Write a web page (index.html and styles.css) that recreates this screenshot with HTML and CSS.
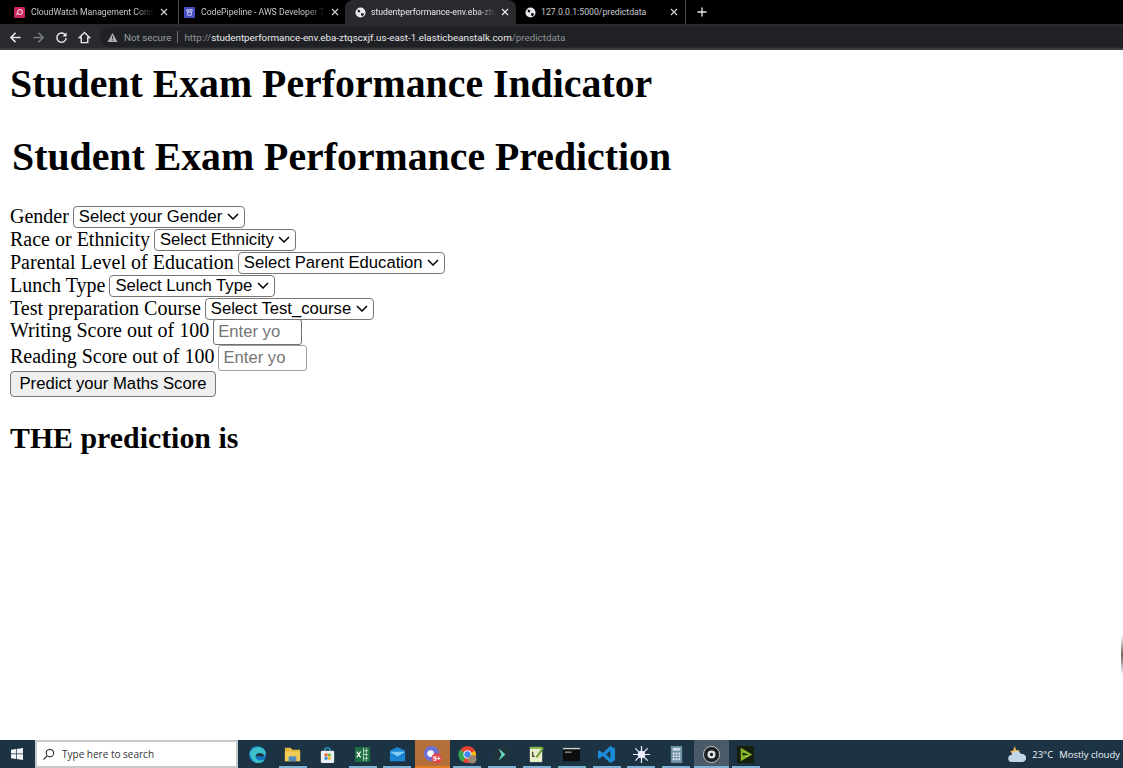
FILE: index.html
```html
<!DOCTYPE html>
<html lang="en">
<head>
<meta charset="utf-8">
<title>Student Exam Performance Indicator</title>
<link rel="stylesheet" href="styles.css">
</head>
<body>
<div class="tabbar">
  <div class="tab tab-first">
    <svg class="favicon" viewBox="0 0 12 12"><rect width="12" height="12" rx="1.500" fill="#c7295c"/><circle cx="6.500" cy="5.500" r="2.600" fill="none" stroke="#f6c9d8" stroke-width="1.200"/><path d="M2.500 8.500 L5 6.500" stroke="#f6c9d8" stroke-width="1.200"/></svg>
    <span class="tab-title">CloudWatch Management Conso</span>
    <svg class="tab-close" viewBox="0 0 8 8"><path d="M1 1l6 6M7 1L1 7" stroke="#cfd1d4" stroke-width="1.200"/></svg>
  </div>
  <div class="tab tab-second">
    <svg class="favicon" viewBox="0 0 12 12"><rect width="12" height="12" rx="1" fill="#4a4fc4"/><path d="M3 3h6v1.500H3zM4 5.500h4V9H4z" fill="none" stroke="#d8d9f5" stroke-width="0.900"/></svg>
    <span class="tab-title">CodePipeline - AWS Developer T</span>
    <svg class="tab-close" viewBox="0 0 8 8"><path d="M1 1l6 6M7 1L1 7" stroke="#cfd1d4" stroke-width="1.200"/></svg>
  </div>
  <div class="tab tab-active">
    <svg class="favicon" viewBox="0 0 12 12"><circle cx="6" cy="6" r="5.500" fill="#e8eaed"/><path d="M3 2.500l3 1.500-1 2-2-.5zM7 6.500l3 .5-1.500 3-2-1z" fill="#202124"/></svg>
    <span class="tab-title">studentperformance-env.eba-ztq</span>
    <svg class="tab-close" viewBox="0 0 8 8"><path d="M1 1l6 6M7 1L1 7" stroke="#e8eaed" stroke-width="1.200"/></svg>
  </div>
  <div class="tab tab-last">
    <svg class="favicon" viewBox="0 0 12 12"><circle cx="6" cy="6" r="5.500" fill="#e8eaed"/><path d="M3 2.500l3 1.500-1 2-2-.5zM7 6.500l3 .5-1.500 3-2-1z" fill="#000"/></svg>
    <span class="tab-title">127.0.0.1:5000/predictdata</span>
    <svg class="tab-close" viewBox="0 0 8 8"><path d="M1 1l6 6M7 1L1 7" stroke="#cfd1d4" stroke-width="1.200"/></svg>
  </div>
  <svg class="new-tab" viewBox="0 0 10 10"><path d="M5 .5v9M.5 5h9" stroke="#e8eaed" stroke-width="1.300"/></svg>
</div>
<div class="toolbar">
  <svg class="nav" viewBox="0 0 14 14"><path d="M12.500 7H2.500M7 2L2 7l5 5" fill="none" stroke="#e8eaed" stroke-width="1.600"/></svg>
  <svg class="nav" viewBox="0 0 14 14"><path d="M1.500 7h9.500M7 2l5 5-5 5" fill="none" stroke="#7b7e82" stroke-width="1.600"/></svg>
  <svg class="nav" viewBox="0 0 14 14"><path d="M11.500 5A5 5 0 1 0 12 7.500" fill="none" stroke="#e8eaed" stroke-width="1.600"/><path d="M12.500 1.500v4.500H8z" fill="#e8eaed"/></svg>
  <svg class="nav" viewBox="0 0 14 14"><path d="M7 1.500L1.500 7H3.500v5.500h7V7h2z" fill="none" stroke="#e8eaed" stroke-width="1.500"/></svg>
  <div class="omnibox">
    <svg class="warn" viewBox="0 0 12 12"><path d="M6 1l5.500 10H.5z" fill="#a8abaf"/><path d="M6 4.500v3M6 8.500v1" stroke="#292a2d" stroke-width="1"/></svg>
    <span class="not-secure">Not secure</span>
    <span class="divider"></span>
    <span class="url"><span class="dim">http://</span>studentperformance-env.eba-ztqscxjf.us-east-1.elasticbeanstalk.com<span class="dim">/predictdata</span></span>
  </div>
</div>
<main class="page">
  <h1 class="title">Student Exam Performance Indicator</h1>
  <form class="form">
    <h1 class="legend">Student Exam Performance Prediction</h1>
    <div class="row"><label>Gender</label><select><option>Select your Gender</option></select></div>
    <div class="row"><label>Race or Ethnicity</label><select><option>Select Ethnicity</option></select></div>
    <div class="row"><label>Parental Level of Education</label><select><option>Select Parent Education</option></select></div>
    <div class="row"><label>Lunch Type</label><select><option>Select Lunch Type</option></select></div>
    <div class="row"><label>Test preparation Course</label><select><option>Select Test_course</option></select></div>
    <div class="row row-input row-input-first"><label>Writing Score out of 100</label><input class="hovered" type="text" placeholder="Enter yo"></div>
    <div class="row row-input"><label>Reading Score out of 100</label><input type="text" placeholder="Enter yo"></div>
    <div class="row row-button"><button type="button">Predict your Maths Score</button></div>
  </form>
  <h2 class="result">THE prediction is</h2>
  <div class="edge-mark"></div>
</main>
<footer class="taskbar">
  <svg class="start" viewBox="0 0 12 12"><path d="M0 1.700l5-.7v4.600H0zM5.700.9L12 0v5.600H5.700zM0 6.300h5v4.700l-5-.7zM5.700 6.300H12V12l-6.300-.9z" fill="#f2f5f7"/></svg>
  <div class="search">
    <svg class="lens" viewBox="0 0 14 14"><circle cx="8.500" cy="5.500" r="4" fill="none" stroke="#222" stroke-width="1.100"/><path d="M5.500 8.500L1.500 12.500" stroke="#222" stroke-width="1.100"/></svg>
    <span>Type here to search</span>
  </div>
  <div class="apps">
    <div class="app"><svg viewBox="0 0 20 20"><circle cx="10" cy="10" r="9" fill="#1277c9"/><path d="M2 8C4 1 14 0 18 6c2 4-1 7-5 6H8c0 3 4 6 10 3-3 5-9 5-12 2C3 14 2 11 2 8z" fill="#3cc0c8"/><path d="M8 12c0-4 7-5 9-1-1 2-3 1.500-4 1z" fill="#1c3344"/></svg></div>
    <div class="app open"><svg viewBox="0 0 20 20"><path d="M2 3h6l2 2h8v12H2z" fill="#e9b93f"/><rect x="2" y="7" width="16" height="10" fill="#f2ca58"/><rect x="6" y="12" width="8" height="5" fill="#4d8cc0"/></svg></div>
    <div class="app"><svg viewBox="0 0 20 20"><rect x="3" y="6" width="14" height="13" rx="1.500" fill="#edf0f2"/><path d="M7 6a3 3 0 0 1 6 0" fill="none" stroke="#2e9fd8" stroke-width="1.500"/><rect x="7" y="9" width="3" height="3" fill="#e2572e"/><rect x="10.500" y="9" width="3" height="3" fill="#79b83a"/><rect x="7" y="12.500" width="3" height="3" fill="#2d8fd5"/><rect x="10.500" y="12.500" width="3" height="3" fill="#f3b61f"/></svg></div>
    <div class="app open"><svg viewBox="0 0 20 20"><rect x="2" y="2" width="16" height="16" rx="1" fill="#1d6f42"/><path d="M11 6h5M11 10h5M11 14h5M11 3v14M14 3v14" stroke="#d8ece1" stroke-width="0.800"/><path d="M4 7l4 6M8 7l-4 6" stroke="#fff" stroke-width="1.300"/></svg></div>
    <div class="app open"><svg viewBox="0 0 20 20"><path d="M2 6l8-4 8 4v11H2z" fill="#1b87d4"/><path d="M2 7l8 5 8-5" fill="#7fcdf4"/></svg></div>
    <div class="app active-app"><svg viewBox="0 0 20 20"><circle cx="9" cy="9" r="8" fill="#6a72d8"/><circle cx="8" cy="9" r="3.500" fill="#fff"/><circle cx="14.500" cy="14" r="5.500" fill="#e0484e"/><text class="badge" x="14.500" y="16.500">9+</text></svg></div>
    <div class="app open"><svg viewBox="0 0 20 20"><circle cx="10" cy="10" r="9" fill="#ea4335"/><path d="M10 10L18 6a9 9 0 0 1-5 12z" fill="#fbbc05"/><path d="M10 10L5 18A9 9 0 0 1 2 5z" fill="#34a853"/><circle cx="10" cy="10" r="4" fill="#4285f4" stroke="#fff"/><circle cx="15" cy="15" r="4.500" fill="#9b8574"/></svg></div>
    <div class="app open"><svg viewBox="0 0 20 20"><rect x="2" y="2" width="16" height="16" fill="#22343b"/><path d="M7 4l3 2 4 4-4 4-3 2 3-6z" fill="#63dcc8"/></svg></div>
    <div class="app open"><svg viewBox="0 0 20 20"><rect x="3" y="2" width="13" height="16" fill="#e9eecb"/><path d="M3 2h13v2H3z" fill="#7fb543"/><path d="M6 7v5h2" stroke="#2f3a1e" stroke-width="1.300" fill="none"/><path d="M10 13l7-10" stroke="#6f9e2e" stroke-width="2"/></svg></div>
    <div class="app open"><svg viewBox="0 0 20 20"><rect x="1" y="3" width="18" height="14" fill="#0d0d0d"/><rect x="1" y="3" width="18" height="1.500" fill="#cfd2d4"/><path d="M3 7.500h7" stroke="#ccc"/></svg></div>
    <div class="app open"><svg viewBox="0 0 20 20"><path d="M14 1l5 3v12l-5 3L6 11.500 2.500 14.500 1 13.500V6.500l1.500-1L6 8.500z" fill="#1d8ad6"/><path d="M14 6l-4.500 4 4.500 4z" fill="#1c3344"/></svg></div>
    <div class="app open"><svg viewBox="0 0 20 20"><circle cx="10" cy="10" r="4" fill="#eef"/><path d="M10 1v18M1 10h18M3.500 3.500l13 13M16.500 3.500l-13 13" stroke="#eef" stroke-width="1.300"/></svg></div>
    <div class="app open"><svg viewBox="0 0 20 20"><rect x="4" y="1" width="12" height="18" fill="#6a8ea3"/><rect x="6" y="3" width="8" height="3" fill="#cfe0ea"/><path d="M6 8h2v2H6zM9 8h2v2H9zM12 8h2v2h-2zM6 11h2v2H6zM9 11h2v2H9zM12 11h2v2h-2zM6 14h2v2H6zM9 14h2v2H9zM12 14h2v2h-2z" fill="#e3edf2"/></svg></div>
    <div class="app running"><svg viewBox="0 0 20 20"><circle cx="10" cy="10" r="8.500" fill="#1d1f22" stroke="#c9ccce"/><circle cx="10" cy="10" r="3" fill="none" stroke="#dfe2e4" stroke-width="2.500"/></svg></div>
    <div class="app open"><svg viewBox="0 0 20 20"><rect x="1" y="1" width="18" height="18" fill="#15200f"/><path d="M5 3l12 7-12 7z" fill="#8ab82c"/><path d="M7 8l6 2-6 1z" fill="#15200f"/></svg></div>
  </div>
  <div class="weather">
    <svg class="cloud" viewBox="0 0 18 18"><path d="M7 1l1 4 4 .5-3 3-4 1-3-3 3-1z" fill="#f1b94a"/><path d="M4 17a3.500 3.500 0 0 1-.5-7 5 5 0 0 1 9.500-1 4 4 0 0 1 2 8z" fill="#c3d6e8"/></svg>
    <span class="temp">23°C</span>
    <span>Mostly cloudy</span>
  </div>
</footer>
</body>
</html>
```

FILE: styles.css
```css
* { box-sizing: border-box; }
html, body { margin: 0; height: 100%; }
body {
  display: flex;
  flex-direction: column;
  height: 768px;
  overflow: hidden;
  background: #fff;
  color: #000;
  font-family: "Liberation Serif", serif;
}
.tabbar {
  display: flex;
  align-items: center;
  height: 24px;
  background: #000;
  font-family: "Roboto", "Liberation Sans", sans-serif;
  font-size: 8.700px;
  color: #c6c8cb;
  padding-left: 9px;
}
.tab {
  display: flex;
  align-items: center;
  height: 24px;
  padding-left: 5px;
  gap: 6px;
}
.tab-first { width: 170px; padding-right: 10px; border-right: 1px solid #4a4b4e; }
.tab-second { width: 166px; padding-right: 6px; }
.tab-active {
  width: 171px;
  padding-left: 10px;
  padding-right: 7px;
  gap: 5px;
  background: #292a2d;
  border-radius: 8px 8px 0 0;
  color: #e8eaed;
}
.tab-last { width: 170px; padding-left: 9px; padding-right: 7px; gap: 5px; border-right: 1px solid #4a4b4e; }
.favicon { width: 11px; height: 11px; flex: none; }
.tab-title {
  flex: 1;
  min-width: 0;
  white-space: nowrap;
  -webkit-mask-image: linear-gradient(to right, #000 85%, transparent 100%);
  mask-image: linear-gradient(to right, #000 85%, transparent 100%);
}
.tab-last .tab-title { -webkit-mask-image: none; mask-image: none; }
.tab-close { width: 8px; height: 8px; flex: none; }
.new-tab { width: 10px; height: 10px; margin-left: 11px; flex: none; }
.toolbar {
  display: flex;
  align-items: center;
  height: 26px;
  padding-top: 2px;
  background: #292a2d;
  border-bottom: 2px solid #3a3b3e;
  padding-left: 9px;
  gap: 10px;
}
.nav { width: 13px; height: 13px; flex: none; }
.omnibox {
  display: flex;
  align-items: center;
  flex: 1;
  height: 20px;
  margin-left: -1px;
  padding-left: 7px;
  gap: 6px;
  background: #202124;
  border-radius: 10px 0 0 10px;
  font-family: "Roboto", "Liberation Sans", sans-serif;
  font-size: 9.800px;
  color: #e8eaed;
}
.warn { width: 11px; height: 11px; }
.not-secure { color: #9aa0a6; }
.divider { width: 1px; height: 12px; background: #6b6e72; }
.dim { color: #8e9297; }
.page { position: relative; flex: 1; min-height: 0; padding: 10px 10px 0; overflow: hidden; }
.title { margin: 0; font-size: 39.800px; line-height: 48px; }
.form { margin: 0; }
.legend { margin: 25px 0 24px 2px; font-size: 39.800px; line-height: 48px; }
.row { display: flex; align-items: center; gap: 4px; height: 23px; font-size: 20px; }
.row-input { align-items: baseline; height: 26px; }
.row-input-first { margin-top: -1px; }
.row-button { height: 26px; }
select, input, button {
  font-family: "Liberation Sans", sans-serif;
  font-size: 16.670px;
  color: #000;
}
select {
  -webkit-appearance: none;
  appearance: none;
  height: 22px;
  padding: 0 21px 0 5px;
  border: 1px solid #767676;
  border-radius: 4px;
  background: #fff url("data:image/svg+xml,%3Csvg xmlns='http://www.w3.org/2000/svg' viewBox='0 0 12 7'%3E%3Cpath d='M1 1l5 5 5-5' fill='none' stroke='%23000' stroke-width='1.500'/%3E%3C/svg%3E") no-repeat right 5px center / 12px 7px;
}
input { width: 89px; height: 26px; padding: 0 4px; border: 1px solid #a0a0a0; border-radius: 3px; }
input.hovered { border-color: #6f6f6f; }
input::placeholder { color: #757575; }
button { height: 26px; width: 206px; padding: 0; border: 1px solid #767676; border-radius: 4px; background: #efefef; }
.result { margin: 24px 0 0; font-size: 29.850px; line-height: 34px; }
.edge-mark {
  position: absolute;
  right: 0;
  top: 585px;
  width: 2px;
  height: 40px;
  background: linear-gradient(to bottom, transparent, #6b625c, transparent);
}
.taskbar {
  display: flex;
  align-items: center;
  height: 28px;
  background: #1c3344;
  font-family: "Open Sans", "Liberation Sans", sans-serif;
  font-size: 9.500px;
  color: #f0f3f5;
}
.start { width: 12px; height: 12px; margin: 0 12px 0 11px; flex: none; }
.search {
  display: flex;
  align-items: center;
  width: 203px;
  height: 28px;
  gap: 7px;
  padding-left: 5px;
  background: #fff;
  border: 2px solid #c5c9cc;
  color: #333;
  font-size: 10px;
}
.lens { width: 13px; height: 13px; }
.apps { display: flex; height: 28px; margin-left: 2.500px; }
.app {
  display: flex;
  align-items: center;
  justify-content: center;
  width: 34.860px;
  height: 28px;
}
.app svg { width: 19px; height: 19px; }
.open { background: linear-gradient(#7fb3d5, #7fb3d5) center bottom / 28px 2px no-repeat; }
.active-app { background: linear-gradient(#e67e22, #e67e22) center bottom / 100% 2px no-repeat, #b5703a; }
.running { background: linear-gradient(#7fb3d5, #7fb3d5) center bottom / 100% 2px no-repeat, #4a5a66; }
.badge { font-family: "Liberation Sans", sans-serif; font-size: 7px; font-weight: 700; fill: #fff; text-anchor: middle; }
.weather { display: flex; align-items: center; gap: 6px; margin-left: auto; padding-right: 3px; }
.cloud { width: 18px; height: 18px; }
```
